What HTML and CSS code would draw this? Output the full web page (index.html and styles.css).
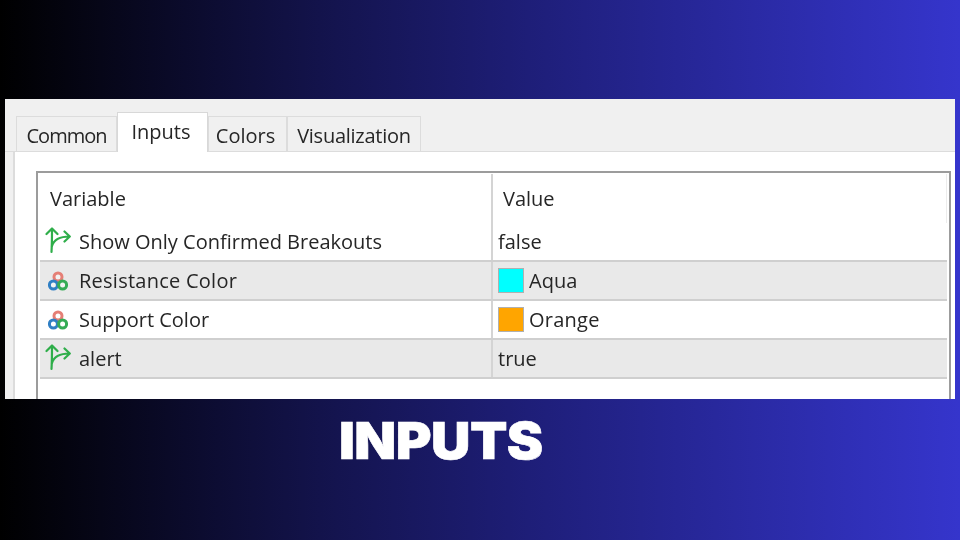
FILE: index.html
```html
<!DOCTYPE html>
<html lang="en">
<head>
<meta charset="utf-8">
<title>Inputs</title>
<link rel="stylesheet" href="styles.css">
</head>
<body>
<svg class="defs" width="0" height="0" aria-hidden="true">
  <symbol id="arrows" viewBox="0 0 26 28">
    <g fill="none" stroke="#2fae4a" stroke-width="2.2" stroke-linecap="round" stroke-linejoin="round">
      <path d="M6.5 26 C7 18 7 10 7 2.5 M1.5 8 L7 2.5 L12.5 8"/>
      <path d="M7 20 C9 13 16 10.5 24.5 10.5 M19.5 5.5 L24.8 10.5 L19.5 15.5"/>
    </g>
  </symbol>
  <symbol id="rings" viewBox="0 0 20 20">
    <g fill="#fff" fill-opacity=".4" stroke-width="3">
      <circle cx="10" cy="6" r="4" stroke="#e57f76"/>
      <circle cx="5.4" cy="14" r="4" stroke="#2f7fc4"/>
      <circle cx="14.6" cy="14" r="4" stroke="#35ab55"/>
    </g>
  </symbol>
</svg>
<main class="window">
  <nav class="tabs">
    <span class="tab tab-common">Common</span>
    <span class="tab tab-active">Inputs</span>
    <span class="tab tab-colors">Colors</span>
    <span class="tab tab-vis">Visualization</span>
  </nav>
  <section class="panel">
    <div class="grid">
      <div class="row head">
        <div class="cell name"><span class="head-name">Variable</span></div>
        <div class="cell value"><span class="head-value">Value</span></div>
      </div>
      <div class="row">
        <div class="cell name"><svg class="icon-arrows"><use href="#arrows"/></svg>Show Only Confirmed Breakouts</div>
        <div class="cell value">false</div>
      </div>
      <div class="row alt">
        <div class="cell name"><svg class="icon-rings"><use href="#rings"/></svg><span class="wide">Resistance Color</span></div>
        <div class="cell value"><i class="swatch aqua"></i>Aqua</div>
      </div>
      <div class="row">
        <div class="cell name"><svg class="icon-rings"><use href="#rings"/></svg>Support Color</div>
        <div class="cell value"><i class="swatch orange"></i><span class="wide">Orange</span></div>
      </div>
      <div class="row alt">
        <div class="cell name"><svg class="icon-arrows"><use href="#arrows"/></svg>alert</div>
        <div class="cell value">true</div>
      </div>
    </div>
  </section>
</main>
<h1 class="caption">INPUTS</h1>
</body>
</html>
```
FILE: styles.css
```css
* { box-sizing: border-box; }
html, body { margin: 0; height: 540px; overflow: hidden; }
body {
  width: 960px;
  padding-top: 99px;
  background: linear-gradient(90deg, #000 0%, #14144f 35%, #1e1e78 55%, #3535cc 100%);
  font-family: "Open Sans", "Noto Sans", sans-serif;
}
.defs { position: absolute; }
.window {
  width: 950px;
  height: 300px;
  margin-left: 5px;
  background: #f0f0f0;
  overflow: hidden;
  color: #262626;
  font-size: 20px;
}
.tabs {
  display: flex;
  align-items: flex-end;
  height: 53px;
  padding-left: 11px;
  border-bottom: 1px solid #dcdcdc;
}
.tab {
  height: 35px;
  width: 101px;
  display: flex;
  align-items: center;
  justify-content: center;
  padding-top: 2px;
  background: #f0f0f0;
  border: 1px solid #dcdcdc;
  border-bottom: 0;
  filter: blur(.4px);
}
.tab-common { letter-spacing: -1px; }
.tab-active {
  width: 91px;
  height: 40px;
  padding-top: 0;
  padding-bottom: 2px;
  padding-right: 3px;
  background: #fff;
  margin-bottom: -1px;
  border-color: #d8d8d8;
}
.tab-colors { width: 79px; padding-right: 4px; }
.tab-vis { width: 134px; letter-spacing: -.25px; }
.panel {
  height: 247px;
  margin-left: 8px;
  padding: 19px 4px 0 21px;
  background: #fff;
  border-left: 2px solid #dcdcdc;
}
.grid {
  height: 260px;
  padding: 1px 2px 0 2px;
  border: 2px solid #9c9c9c;
}
.row {
  display: grid;
  grid-template-columns: 451px 1fr;
  height: 39px;
  border-bottom: 2px solid #cfcfcf;
  align-items: stretch;
}
.head { height: 49px; border-bottom: 0; }
.head .value { border-right: 1px solid #ececec; }
.alt { background: #e9e9e9; }
.cell {
  display: flex;
  align-items: center;
  filter: blur(.4px);
}
.name { padding-left: 5px; }
.value {
  padding-left: 5px;
  border-left: 2px solid #d4d4d4;
}
.wide { letter-spacing: .25px; }
.head-name { margin-left: 5px; }
.head-value { margin-left: 5px; }
.icon-arrows { width: 26px; height: 28px; margin-right: 8px; margin-top: -3px; flex: none; }
.icon-rings { width: 20px; height: 20px; margin: 0 11px 0 3px; flex: none; }
.swatch {
  width: 26px;
  height: 25px;
  margin-right: 5px;
  border: 1px solid #b0b0b0;
  flex: none;
}
.aqua { background: #00ffff; }
.orange { background: #ffa500; }
.caption {
  display: inline-block;
  margin: 17px 0 0 339px;
  color: #fff;
  font-family: Inter, "Liberation Sans", sans-serif;
  font-size: 51px;
  font-weight: 900;
  line-height: 50px;
  letter-spacing: -.5px;
  -webkit-text-stroke: .6px #fff;
  transform: scaleX(1.07);
  transform-origin: left center;
}
```
